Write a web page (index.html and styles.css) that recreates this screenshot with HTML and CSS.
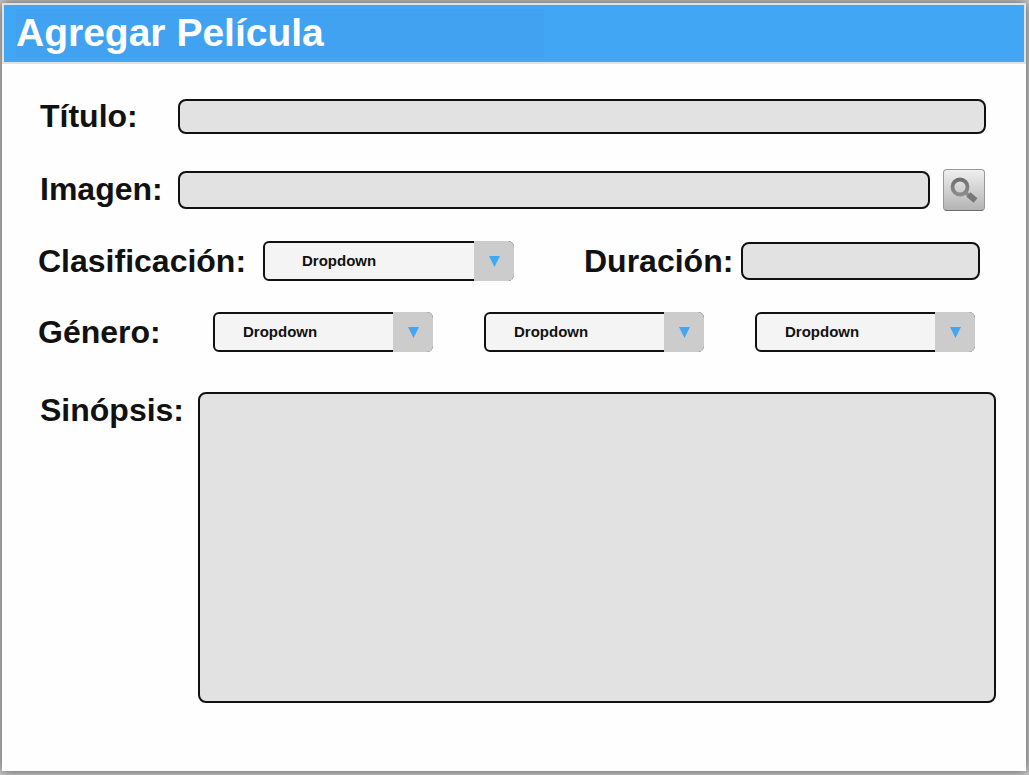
FILE: index.html
```html
<!DOCTYPE html>
<html lang="es">
<head>
  <meta charset="utf-8">
  <meta name="viewport" content="width=device-width, initial-scale=1">
  <title>Agregar Película</title>
  <link rel="stylesheet" href="styles.css">
</head>
<body>
  <main class="panel">
    <header class="panel-header">
      <h1 class="panel-title">Agregar Película</h1>
    </header>
    <form class="form">
      <div class="row row-title">
        <label class="label label-short" for="titulo">Título:</label>
        <input class="field" id="titulo" type="text">
      </div>
      <div class="row row-image">
        <label class="label label-short" for="imagen">Imagen:</label>
        <input class="field" id="imagen" type="text">
        <button class="search" type="button" aria-label="Buscar imagen">
          <svg class="search-icon" viewBox="1 1 40 40" aria-hidden="true">
            <defs>
              <linearGradient id="lens" x1="0" y1="0" x2="0" y2="1">
                <stop offset="0" stop-color="#707070"/>
                <stop offset="1" stop-color="#8c8c8c"/>
              </linearGradient>
            </defs>
            <path d="M22.500 23.500 L27 27.500" stroke="#8b8b8b" stroke-width="3.600"/>
            <path d="M25.500 25.500 L32.500 31.500" stroke="#777" stroke-width="6"/>
            <circle cx="17" cy="18" r="7.500" fill="none" stroke="url(#lens)" stroke-width="3.800"/>
          </svg>
        </button>
      </div>
      <div class="row row-rating">
        <div class="group">
          <label class="label label-rating" for="clasificacion">Clasificación:</label>
          <div class="dropdown dropdown-wide">
            <select class="select" id="clasificacion"><option>Dropdown</option></select>
            <svg class="arrow" viewBox="0 0 40 40" aria-hidden="true"><path d="M15 15h11l-5.500 11z"/></svg>
          </div>
        </div>
        <div class="group">
          <label class="label label-duration" for="duracion">Duración:</label>
          <input class="field field-duration" id="duracion" type="text">
        </div>
      </div>
      <div class="row row-genre">
        <label class="label label-genre" for="genero">Género:</label>
        <div class="genres">
          <div class="dropdown">
            <select class="select" id="genero"><option>Dropdown</option></select>
            <svg class="arrow" viewBox="0 0 40 40" aria-hidden="true"><path d="M15 15h11l-5.500 11z"/></svg>
          </div>
          <div class="dropdown">
            <select class="select" aria-label="Segundo género"><option>Dropdown</option></select>
            <svg class="arrow" viewBox="0 0 40 40" aria-hidden="true"><path d="M15 15h11l-5.500 11z"/></svg>
          </div>
          <div class="dropdown">
            <select class="select" aria-label="Tercer género"><option>Dropdown</option></select>
            <svg class="arrow" viewBox="0 0 40 40" aria-hidden="true"><path d="M15 15h11l-5.500 11z"/></svg>
          </div>
        </div>
      </div>
      <div class="row row-synopsis">
        <label class="label label-synopsis" for="sinopsis">Sinópsis:</label>
        <textarea class="field field-synopsis" id="sinopsis"></textarea>
      </div>
    </form>
  </main>
</body>
</html>
```

FILE: styles.css
```css
* {
  box-sizing: border-box;
}

body {
  display: flex;
  min-height: 100vh;
  margin: 0;
  padding: 3px 3px 4px 2px;
  background: #c8c8c8;
  font-family: "Liberation Sans", Arial, sans-serif;
  font-weight: bold;
  color: #111;
}

.panel {
  flex: 1;
  min-width: 0;
  background: #fefefe;
  box-shadow: 0 0 10px #555;
}

.panel-header {
  padding: 4px 12px 5px;
  border: 2px solid #e2e2e2;
  background: #41a7f5;
}

.panel-title {
  width: 53%;
  min-width: max-content;
  margin: 0;
  background: #41a2f2;
  font-size: 39px;
  line-height: 48px;
  color: #fff;
}

.form {
  display: flex;
  flex-direction: column;
  padding: 35px 30px 64px 36px;
}

.row {
  display: flex;
  align-items: center;
}

.row-title {
  padding-right: 10px;
}

.row-image {
  margin-top: 35px;
  padding-right: 11px;
}

.row-rating {
  justify-content: space-between;
  margin-top: 30px;
  padding-right: 16px;
}

.row-genre {
  margin-top: 31px;
  padding-right: 21px;
}

.row-synopsis {
  align-items: flex-start;
  margin-top: 40px;
}

.group {
  display: flex;
  align-items: center;
}

.label {
  flex: none;
  font-size: 32px;
  line-height: 36px;
  font-variant-ligatures: none;
}

.label-short {
  width: 140px;
  padding: 0 0 2px 2px;
  line-height: 32px;
}

.label-rating {
  width: 225px;
}

.label-duration {
  width: 157px;
}

.label-genre {
  width: 175px;
}

.label-synopsis {
  width: 160px;
  padding-left: 2px;
}

.field {
  flex: 1;
  min-width: 0;
  height: 38px;
  padding: 0 10px;
  border: 2px solid #111;
  border-radius: 8px;
  background: #e2e2e2;
  font: inherit;
  font-size: 16px;
}

.row-title .field {
  height: 35px;
}

.field-duration {
  flex: none;
  width: 239px;
}

.field-synopsis {
  display: block;
  height: 311px;
  padding: 10px;
  resize: vertical;
}

.field-synopsis::-webkit-resizer {
  display: none;
}

.search {
  flex: none;
  width: 42px;
  height: 42px;
  margin-left: 13px;
  padding: 0;
  border: 1px solid #999;
  border-bottom-color: #6c6c6c;
  border-radius: 4px;
  background: linear-gradient(#efefef, #b4b4b4);
}

.search-icon {
  display: block;
  width: 40px;
  height: 40px;
}

.genres {
  flex: 1;
  display: grid;
  grid-template-columns: repeat(3, 1fr);
  gap: 51px;
}

.dropdown {
  position: relative;
  height: 40px;
}

.dropdown-wide {
  width: 251px;
}

.select {
  appearance: none;
  width: 100%;
  height: 100%;
  padding: 0 40px 2px 28px;
  border: 2px solid #111;
  border-radius: 6px;
  background: #f4f4f4;
  font: inherit;
  font-size: 15px;
  color: #111;
}

.dropdown-wide .select {
  padding-left: 37px;
}

.arrow {
  position: absolute;
  top: 0;
  right: 0;
  width: 40px;
  height: 40px;
  border-radius: 0 6px 6px 0;
  background: #ccc;
  fill: #41a7f5;
  pointer-events: none;
}
```
